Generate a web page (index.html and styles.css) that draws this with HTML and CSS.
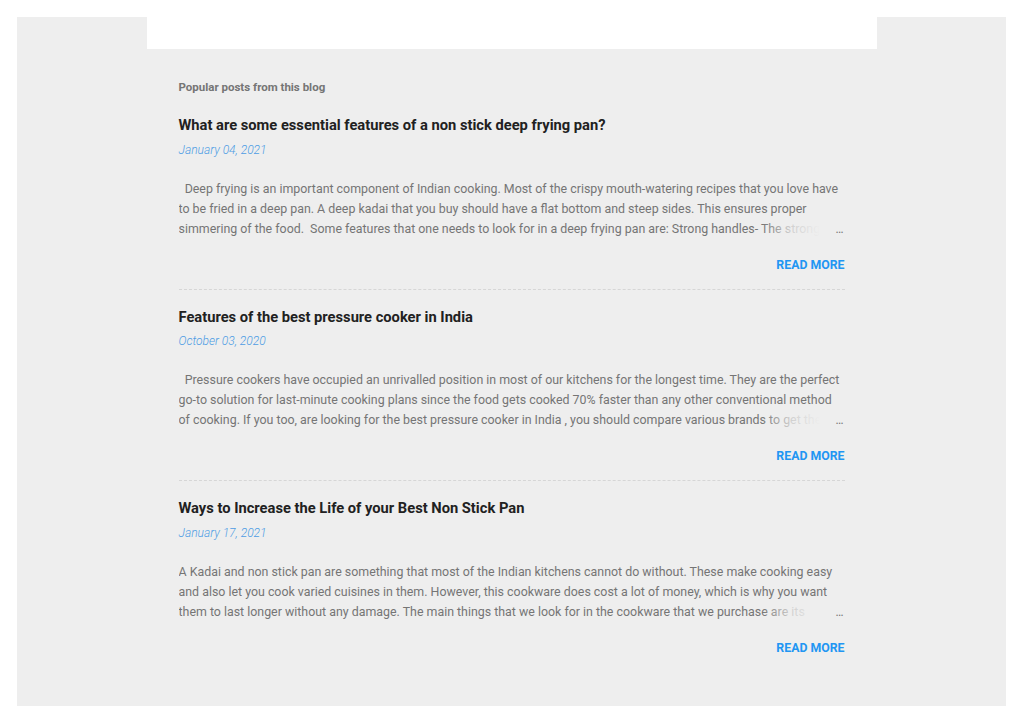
FILE: index.html
```html
<!DOCTYPE html>
<html>
<head>
<meta charset="utf-8">
<link rel="stylesheet" href="styles.css">
</head>
<body>
<div class="page">
  <div class="column">
    <div class="topbox"></div>
    <div class="popular">
      <h3 class="label">Popular posts from this blog</h3>
      <article class="post">
        <h3 class="title">What are some essential features of a non stick deep frying pan?</h3>
        <div class="date">January 04, 2021</div>
        <div class="snippet">
          <div class="snippet-text">&nbsp; Deep frying is an important component of Indian cooking. Most of the crispy mouth-watering recipes that you love have to be fried in a deep pan. A deep kadai that you buy should have a flat bottom and steep sides. This ensures proper simmering of the food.&nbsp; Some features that one needs to look for in a deep frying pan are: Strong handles- The strong handles are a must for the deep frying pan so that you can lift it easily.</div>
          <div class="fade">…</div>
        </div>
        <div class="more"><a href="#">READ MORE</a></div>
      </article>
      <article class="post">
        <h3 class="title">Features of the best pressure cooker in India</h3>
        <div class="date">October 03, 2020</div>
        <div class="snippet">
          <div class="snippet-text">&nbsp; Pressure cookers have occupied an unrivalled position in most of our kitchens for the longest time. They are the perfect go-to solution for last-minute cooking plans since the food gets cooked 70% faster than any other conventional method of cooking. If you too, are looking for the best pressure cooker in India , you should compare various brands to get the best one for your kitchen.</div>
          <div class="fade">…</div>
        </div>
        <div class="more"><a href="#">READ MORE</a></div>
      </article>
      <article class="post">
        <h3 class="title">Ways to Increase the Life of your Best Non Stick Pan</h3>
        <div class="date">January 17, 2021</div>
        <div class="snippet">
          <div class="snippet-text">A Kadai and non stick pan are something that most of the Indian kitchens cannot do without. These make cooking easy and also let you cook varied cuisines in them. However, this cookware does cost a lot of money, which is why you want them to last longer without any damage. The main things that we look for in the cookware that we purchase are its durability and quality of the product.</div>
          <div class="fade">…</div>
        </div>
        <div class="more"><a href="#">READ MORE</a></div>
      </article>
    </div>
  </div>
</div>
</body>
</html>
```

FILE: styles.css
```css
html, body {
  margin: 0;
  padding: 0;
  background: #ffffff;
}
body {
  padding: 17px 18px 17px 17px;
  font-family: Roboto, "Liberation Sans", Arial, sans-serif;
}
.page {
  background: #eeeeee;
  height: 689px;
  display: flex;
  justify-content: center;
}
.column {
  width: 730px;
}
.topbox {
  background: #ffffff;
  height: 32px;
}
.popular {
  padding: 30px 32px 0 32px;
}
.label {
  margin: 0;
  font-size: 11.5px;
  font-weight: 700;
  line-height: 16px;
  color: #757575;
}
.post {
  padding-top: 18px;
  padding-bottom: 16px;
  border-bottom: 1px dashed #d6d6d6;
}
.post + .post {
  padding-top: 15px;
}
.post:last-child {
  border-bottom: none;
}
.title {
  margin: 0;
  font-size: 14.7px;
  font-weight: 700;
  line-height: 24px;
  color: #212121;
}
.date {
  margin-top: 4.5px;
  font-size: 12px;
  font-style: italic;
  font-weight: 300;
  line-height: 16px;
  color: #4d9ce4;
}
.snippet {
  position: relative;
  margin-top: 21px;
  height: 60px;
  overflow: hidden;
}
.snippet-text {
  font-size: 12.4px;
  line-height: 20px;
  color: #757575;
}
.fade {
  position: absolute;
  right: 0;
  bottom: 0;
  width: 82px;
  height: 20px;
  line-height: 20px;
  font-size: 12px;
  color: #757575;
  text-align: right;
  padding-right: 1px;
  background: linear-gradient(to right, rgba(238,238,238,0) 0%, rgba(238,238,238,0.75) 35%, #eeeeee 70%, #eeeeee 100%);
}
.more {
  margin-top: 17px;
  text-align: right;
  line-height: 16px;
}
.more a {
  font-size: 12.3px;
  font-weight: 700;
  color: #2196f3;
  text-decoration: none;
}
```
